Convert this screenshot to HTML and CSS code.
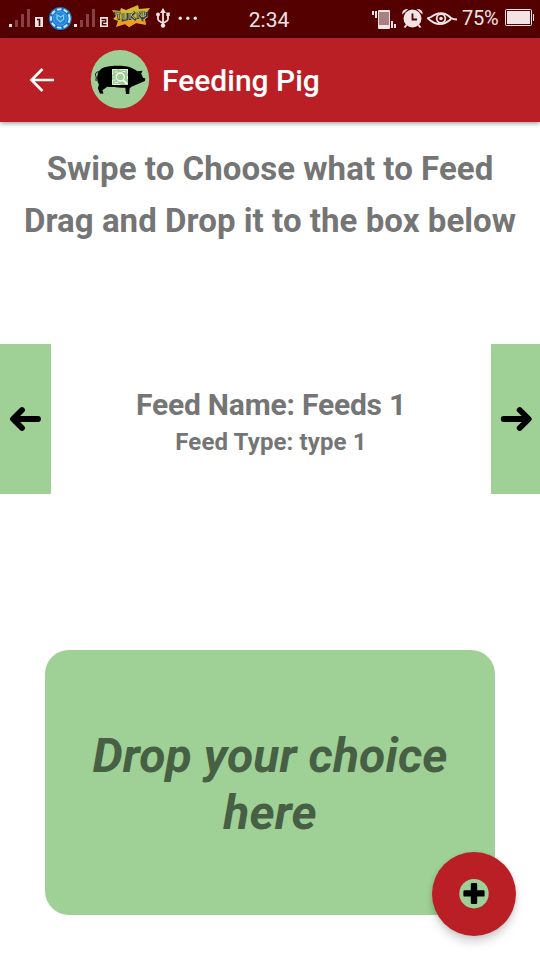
FILE: index.html
```
<!DOCTYPE html>
<html lang="en">
<head>
<meta charset="utf-8">
<title>Feeding Pig</title>
<link rel="stylesheet" href="styles.css">
</head>
<body>
<div class="screen">
  <header class="status">
    <div class="status-left">
      <svg width="46" height="38" viewBox="0 0 46 38"><path fill="#f0e4e4" d="M9 24h3v3H9zM35 17h8v10h-8z"/><path fill="#874343" d="M15 20h3v7h-3zM21 14h3v13h-3zM27 9h3v18h-3z"/><path d="M37 19.500h2.500V26" fill="none" stroke="#500" stroke-width="1.600"/></svg>
      <svg width="28" height="38" viewBox="46 0 28 38"><circle cx="60.300" cy="18.500" r="11.500" fill="#1671c9"/><circle cx="60.300" cy="18.500" r="9.300" fill="none" stroke="#cde6f8" stroke-width="2" stroke-dasharray="4.500 2.200"/><circle cx="60.300" cy="18.500" r="6.800" fill="#2189dc" stroke="#4aa5e8"/><path d="M57 15v4l3.300 3 3.300-3v-4l-3 2z" fill="none" stroke="#8ccbf5" stroke-width="1.200"/></svg>
      <svg width="36" height="38" viewBox="74 0 36 38"><path fill="#f0e4e4" d="M74 24h3v3h-3zM100 17h8v10h-8z"/><path fill="#874343" d="M80 20h3v7h-3zM86 14h3v13h-3zM92 9h3v18h-3z"/><path d="M101.500 19.500h4.200v2.500h-3.200v2.700h4" fill="none" stroke="#500" stroke-width="1.400"/></svg>
      <svg width="42" height="38" viewBox="110 0 42 38"><path fill="#d3b632" d="M112 10l8 1 1-3 5 2 12-5 1 4 11-1-4 6 2 3-4 3 2 5-10-2-7 4-4-3-9 3 2-6-5-2 3-3z"/><path fill="#f39c19" d="M119 20l12 1 14-2 1 5-10-1-7 4-4-3-8 2z"/><path d="M114 13l7 0m-3 0 1 7m4-7v7l4-1v-6m3 0v7m5-8-4 4 5 4m2-8v7m0-7 4 6v-7m2 0-1 7 4-3v-3" fill="none" stroke="#34405f" stroke-width="2.600"/><path d="M115 13h6m-3 0 1 6m4-6v6h3v-6m4 0v6m4-7-3 3 4 4m3-7v6m0-6 4 5v-6m2 0-1 6 3-2" fill="none" stroke="#c9d04b" stroke-width=".9"/></svg>
      <svg width="24" height="38" viewBox="152 0 24 38"><g fill="none" stroke="#f0e0e2" stroke-width="1.800"><path d="M163 11v15M158 15v4q0 2 5 4M168 15v4q0 2-5 4"/></g><g fill="#f0e0e2"><path d="M160 13l3-5 3 5zM166.300 12.500h3.500v3.500h-3.500z"/><circle cx="158" cy="14.500" r="2"/><circle cx="163" cy="25.500" r="2.200"/></g></svg>
      <svg width="24" height="38" viewBox="176 0 24 38"><g fill="#f0e0e2"><circle cx="180.300" cy="18.300" r="1.700"/><circle cx="187.800" cy="18.300" r="1.700"/><circle cx="195.300" cy="18.300" r="1.700"/></g></svg>
    </div>
    <span class="clock">2:34</span>
    <div class="status-right">
      <svg width="30" height="38" viewBox="370 0 30 38"><rect x="378" y="10" width="12" height="19" rx="1" fill="#f0e4e4"/><path fill="#aa8080" d="M379 12h10v13h-10z"/><path fill="#f0e4e4" d="M372 11h2v4h-2zM375 11h2v7h-2zM391 21h2v7h-2zM394 24h2v4h-2z"/></svg>
      <svg width="27" height="38" viewBox="400 0 27 38"><g fill="#f0e4e4"><circle cx="412.500" cy="18.500" r="9"/><path d="M402.300 14.500q-1-5.500 6-5.500zM422.500 14.500q1-5.500-6-5.500z"/></g><path d="M406.500 25l-2 2.500M418.500 25l2 2.500" stroke="#f0e4e4" stroke-width="2"/><path d="M412.500 13.500v6h4.500" fill="none" stroke="#500" stroke-width="1.800"/></svg>
      <svg width="33" height="38" viewBox="427 0 33 38"><g fill="none" stroke="#f0e4e4" stroke-width="1.800"><path d="M427 18.500l4-1.500q11-8 20 1 2 1.500 6 1.500M428 18.500q12 11 23 .5"/><circle cx="441" cy="18.500" r="4.300"/></g><circle cx="441" cy="18.500" r="1.800" fill="#f0e4e4"/></svg>
      <span class="percent">75%</span>
      <svg width="35" height="38" viewBox="505 0 35 38"><rect x="505.500" y="9.500" width="26" height="16" rx="1" fill="none" stroke="#f0e4e4"/><path fill="#f0e4e4" d="M507 11h23v13h-23zM533 14h1v7h-1z"/></svg>
    </div>
  </header>
  <div class="toolbar">
    <svg class="back" width="26" height="26" viewBox="0 0 26 26"><path d="M25 13H3M13.500 2 2.500 13l11 11" fill="none" stroke="#fff" stroke-width="2.600"/></svg>
    <svg class="logo" width="60" height="60" viewBox="90 49 60 60"><circle cx="120" cy="79.200" r="29.200" fill="#9fcf96"/><path d="M99.500 70.500C104 65.500 116 65.500 125 66.200c5 .4 9 2.300 12.500 5l5-.5-1.300 3 1.800 4 2.300.8-.3 2.600-6 2.400-8 3.400-1.500 1.800-.2 5.200H126l-.7-6.200c-7 .2-13-.3-18-.9l-5.300 3.700 1.500 3H100l-1.500-4 .6-5C96.500 81 96.500 74.500 99.500 70.500z"/><path d="M99 84l1 4.500 2 .8 1.300 4H100l-2-5z"/><path d="M99.500 72c-3-1-5 2-3.500 4.500 1 2-1 3.500.5 4.500" fill="none" stroke="#000" stroke-width="1"/><path fill="#9fcf96" d="M112 69h16v16h-16z"/><path d="M112.500 69.500h5m2 0h8v4M112.500 69.500v5m2-2.500h3m5-.5h3M112.500 77h2m-2 3h3m-3 4.500h8m-6-2h4M127.500 76v3m-15 1v4" fill="none" stroke="#e6f3e2"/><circle cx="120.300" cy="77" r="4" fill="#9fcf96" stroke="#fff" stroke-width="1.300"/><path d="M123.300 80.300l4 4" stroke="#fff" stroke-width="1.800"/></svg>
    <h1 class="title">Feeding Pig</h1>
  </div>
  <main class="content">
    <p class="hint first">Swipe to Choose what to Feed</p>
    <p class="hint">Drag and Drop it to the box below</p>
    <section class="picker">
      <button class="nav" aria-label="Previous"><svg width="51" height="150" viewBox="0 0 51 150"><path d="M38 75H14M22 66 13 75l9 9" fill="none" stroke="#000" stroke-width="5.800" stroke-linecap="round" stroke-linejoin="round"/></svg></button>
      <div class="feed">
        <p class="feed-name">Feed Name: Feeds 1</p>
        <p class="feed-type">Feed Type: type 1</p>
      </div>
      <button class="nav" aria-label="Next"><svg width="49" height="150" viewBox="491 344 49 150"><path d="M503.700 419h24M519.700 410l9 9-9 9" fill="none" stroke="#000" stroke-width="5.800" stroke-linecap="round" stroke-linejoin="round"/></svg></button>
    </section>
    <section class="drop">Drop your choice here</section>
  </main>
  <button class="fab" aria-label="Add"><svg width="30" height="30" viewBox="0 0 30 30"><circle cx="15" cy="14.700" r="14.700" fill="#9fcf96"/><path fill="#000" d="M13 4h4q1.200 0 1.200 1.200V11.200h6.200q1.200 0 1.200 1.200v4q0 1.200-1.200 1.200h-6.200v6.200q0 1.200-1.200 1.200h-4q-1.200 0-1.200-1.200v-6.200H5.600q-1.200 0-1.200-1.200v-4q0-1.200 1.200-1.200h6.200V5.200Q11.800 4 13 4z"/></svg></button>
</div>
</body>
</html>
```
FILE: styles.css
```
* { box-sizing: border-box; }
body, p, h1 { margin: 0; }
svg { display: block; flex: none; }
button { border: 0; padding: 0; }
.screen {
  position: relative;
  width: 540px;
  height: 960px;
  overflow: hidden;
  background: #fff;
  font-family: Roboto, sans-serif;
  color: #757575;
}
.status {
  display: grid;
  grid-template-columns: 200px 138px 202px;
  height: 38px;
  background: #550000;
  color: #f0e4e4;
}
.status-left, .status-right { display: flex; }
.status-right { justify-content: flex-end; }
.clock { text-align: center; font-size: 21px; line-height: 40px; }
.percent { width: 45px; padding-left: 2px; font-size: 20px; letter-spacing: -.2px; line-height: 37px; }
.toolbar {
  display: flex;
  align-items: center;
  height: 84px;
  padding: 0 0 2px 29px;
  background: #ba1f26;
  box-shadow: 0 1px 5px rgba(0, 0, 0, .45);
}
.back { margin-top: 2px; }
.logo { margin-left: 35px; }
.title {
  margin-left: 12px;
  padding-top: 3px;
  color: #fff;
  font-size: 30px;
  font-weight: 500;
  line-height: 36px;
  white-space: nowrap;
}
.content { display: flex; flex-direction: column; padding-top: 21px; }
.hint {
  text-align: center;
  font-size: 33px;
  font-weight: 700;
  letter-spacing: .06px;
  line-height: 52px;
  white-space: nowrap;
}
.picker {
  display: grid;
  grid-template-columns: 51px 440px 49px;
  height: 150px;
  margin-top: 97px;
}
.nav { background: #9fd196; }
.feed { padding-top: 43px; text-align: center; font-weight: 700; white-space: nowrap; }
.feed-name { font-size: 30px; letter-spacing: -.2px; line-height: 36px; }
.feed-type { font-size: 24px; letter-spacing: .12px; line-height: 38px; }
.drop {
  display: flex;
  align-items: center;
  justify-content: center;
  height: 265px;
  margin: 156px 45px 0;
  padding: 2px 30px 0;
  border-radius: 24px;
  background: #9fd196;
  color: #475f44;
  font-size: 48px;
  font-style: italic;
  font-weight: 700;
  letter-spacing: .1px;
  line-height: 57px;
  text-align: center;
}
.fab {
  position: absolute;
  right: 24px;
  bottom: 24px;
  display: flex;
  align-items: center;
  justify-content: center;
  width: 84px;
  height: 84px;
  border-radius: 50%;
  background: #ba1f26;
  box-shadow: 0 7px 9px rgba(0, 0, 0, .14), 0 1px 5px rgba(0, 0, 0, .12);
}
```
